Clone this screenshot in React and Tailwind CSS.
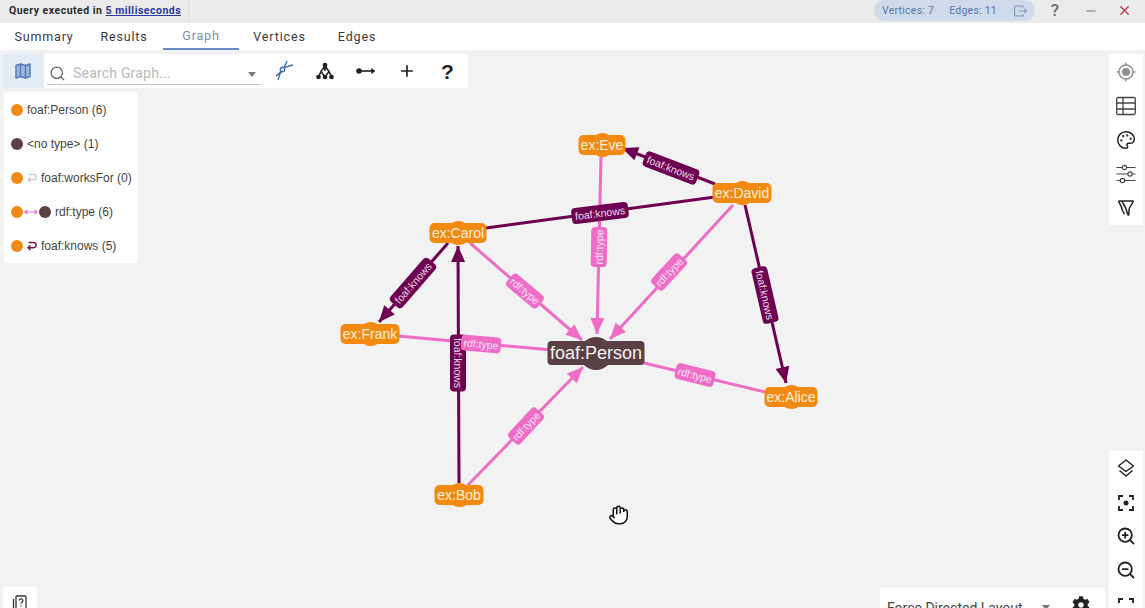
import { Search, Palette, ZoomIn, ZoomOut, Minus, X, Plus } from 'lucide-react';
import { FaCog } from 'react-icons/fa';

const DARK = '#6d0050';
const PINK = '#ee6cc6';

const edges = [
  { x1: 715, y1: 184, x2: 622, y2: 148, c: DARK, w: 3, arrow: true },
  { x1: 715, y1: 197, x2: 486, y2: 228, c: DARK, w: 3 },
  { x1: 745, y1: 205, x2: 786, y2: 383, c: DARK, w: 3, arrow: true },
  { x1: 448, y1: 243, x2: 379, y2: 322, c: DARK, w: 3, arrow: true },
  { x1: 459, y1: 483, x2: 458, y2: 246, c: DARK, w: 3, arrow: true },
  { x1: 601, y1: 157, x2: 597, y2: 334, c: PINK, w: 3, arrow: true },
  { x1: 733, y1: 205, x2: 610, y2: 339, c: PINK, w: 3, arrow: true },
  { x1: 470, y1: 243, x2: 582, y2: 340, c: PINK, w: 3, arrow: true },
  { x1: 398, y1: 336, x2: 552, y2: 350, c: PINK, w: 3 },
  { x1: 765, y1: 392, x2: 640, y2: 362, c: PINK, w: 3 },
  { x1: 468, y1: 485, x2: 583, y2: 367, c: PINK, w: 3, arrow: true },
];

const labels = [
  { text: 'foaf:knows', x: 671, y: 168, r: 21, dark: true },
  { text: 'foaf:knows', x: 600, y: 213, r: -7, dark: true },
  { text: 'foaf:knows', x: 765, y: 295, r: 77, dark: true },
  { text: 'foaf:knows', x: 413, y: 283, r: -49, dark: true },
  { text: 'foaf:knows', x: 458, y: 363, r: 90, dark: true },
  { text: 'rdf:type', x: 599, y: 247, r: -89 },
  { text: 'rdf:type', x: 669, y: 272, r: -47 },
  { text: 'rdf:type', x: 525, y: 291, r: 40 },
  { text: 'rdf:type', x: 481, y: 344, r: 5 },
  { text: 'rdf:type', x: 695, y: 375, r: 14 },
  { text: 'rdf:type', x: 526, y: 426, r: -47 },
];

const nodes = [
  { text: 'ex:Eve', x: 602, y: 145, w: 47 },
  { text: 'ex:David', x: 742, y: 193, w: 59 },
  { text: 'ex:Carol', x: 458, y: 233, w: 57 },
  { text: 'ex:Frank', x: 370, y: 334, w: 59 },
  { text: 'ex:Alice', x: 791, y: 397, w: 53 },
  { text: 'ex:Bob', x: 459, y: 495, w: 49 },
];

function arrowPoints(e) {
  const a = Math.atan2(e.y2 - e.y1, e.x2 - e.x1);
  const len = 16;
  const half = 7;
  const bx = e.x2 - Math.cos(a) * len;
  const by = e.y2 - Math.sin(a) * len;
  const px = -Math.sin(a) * half;
  const py = Math.cos(a) * half;
  return `${e.x2},${e.y2} ${bx + px},${by + py} ${bx - px},${by - py}`;
}

function Dot({ dark }) {
  return <span className={`block w-[12px] h-[12px] rounded-full ${dark ? 'bg-[#5a4044]' : 'bg-[#f28a12]'}`} />;
}

function LoopArrow({ color }) {
  return (
    <svg width="10" height="11" viewBox="0 0 10 11" fill="none" stroke={color} strokeWidth="1.4">
      <path d="M1.500 1.500h5a2.600 2.600 0 0 1 0 5.200H1" />
      <path d="M3.400 4.300 1 6.700l2.400 2.400" />
    </svg>
  );
}

function LegendRow({ children, label }) {
  return (
    <div className="h-[34px] flex items-center pl-[7px] gap-[4px] text-[12px] text-[#444] whitespace-nowrap">
      {children}
      <span>{label}</span>
    </div>
  );
}

function Legend() {
  return (
    <div className="absolute left-[4px] top-[92px] w-[134px] h-[171px] pt-[1px] bg-white rounded-[3px] font-['Liberation_Sans',sans-serif]">
      <LegendRow label="foaf:Person (6)"><Dot /></LegendRow>
      <LegendRow label="<no type> (1)"><Dot dark /></LegendRow>
      <LegendRow label="foaf:worksFor (0)"><Dot /><LoopArrow color="#c9cfc9" /></LegendRow>
      <LegendRow label="rdf:type (6)">
        <Dot />
        <svg width="14" height="8" viewBox="0 0 14 8" className="ml-[-3px] mr-[-3px]" fill="none" stroke="#ee6cc6" strokeWidth="1.2">
          <path d="M1 4h12M10.500 2 13 4l-2.500 2M3.500 2 1 4l2.500 2" />
        </svg>
        <Dot dark />
      </LegendRow>
      <LegendRow label="foaf:knows (5)"><Dot /><LoopArrow color="#7d1248" /></LegendRow>
    </div>
  );
}

function Toolbar() {
  return (
    <div className="absolute left-[2px] top-[54px] flex h-[34px] w-[466px] bg-white rounded-[3px]">
      <div className="w-[42px] shrink-0 bg-[#e3ebf5] flex items-center justify-center">
        <svg width="18" height="18" viewBox="0 0 18 18" fill="#9db8dc" stroke="#5478b5" strokeWidth="1.400" strokeLinejoin="round">
          <path d="M2 3.500 6.500 2l5 1.500L16 2v12.500L11.500 16l-5-1.500L2 16z" />
          <path d="M6.500 2v12.500M11.500 3.500V16" fill="none" />
        </svg>
      </div>
      <div className="relative ml-[3px] w-[214px] shrink-0 h-[31px] border-b border-[#c4c4c4] flex items-end pb-[2px]">
        <Search size={17} strokeWidth={1.8} className="ml-[2px] text-[#666]" />
        <span className="ml-[7px] text-[14px] leading-[18px] text-[#b9b9b9] font-['Roboto',sans-serif] tracking-[0.2px]">Search Graph...</span>
        <span className="absolute right-[5px] top-[18px] w-0 h-0 border-x-[4px] border-x-transparent border-t-[5px] border-t-[#777]" />
      </div>
      <div className="flex items-center ml-[2px]">
        <div className="w-[41px] flex justify-center">
          <svg width="20" height="22" viewBox="0 0 20 22" fill="none" stroke="#3f6fb5" strokeWidth="1.400">
            <path d="M2 16c2-1 4-3 6-6s6-4 11-5" />
            <path d="M4 20c1-4 2-7 4-10s4-5 5-9" />
            <circle cx="8.500" cy="9.500" r="2.200" fill="#fff" />
          </svg>
        </div>
        <div className="w-[41px] flex justify-center">
          <svg width="18" height="18" viewBox="0 0 18 18" fill="#1f1f1f" stroke="#1f1f1f" strokeWidth="1.500">
            <path d="M9 4 5 9.500 2.500 15M9 4l4 5.500 2.500 5.500M9 4v5M5 9.500 9 15l4-5.500" fill="none" />
            <circle cx="9" cy="3" r="1.600" />
            <circle cx="2.500" cy="15" r="1.600" />
            <circle cx="9" cy="15" r="1.600" />
            <circle cx="15.500" cy="15" r="1.600" />
          </svg>
        </div>
        <div className="w-[41px] flex justify-center">
          <svg width="20" height="10" viewBox="0 0 20 10" fill="#1f1f1f" stroke="#1f1f1f" strokeWidth="1.600">
            <path d="M3 5h15" />
            <circle cx="3" cy="5" r="2" />
            <path d="M15.500 2.500 19 5l-3.500 2.500z" strokeWidth="0.600" />
          </svg>
        </div>
        <div className="w-[41px] flex justify-center"><Plus size={18} strokeWidth={2.2} className="text-[#1f1f1f]" /></div>
        <div className="w-[41px] text-center text-[21px] font-bold leading-none text-[#1f1f1f] font-['Liberation_Sans',sans-serif]">?</div>
      </div>
    </div>
  );
}

function RightTools() {
  return (
    <div className="absolute right-[2px] top-[54px] w-[34px] h-[171px] bg-white flex flex-col items-center pt-[8px] gap-[14px] text-[#333]">
      <svg width="20" height="20" viewBox="0 0 20 20" fill="none" stroke="#8f8f8f" strokeWidth="1.400">
        <circle cx="10" cy="10" r="7" />
        <circle cx="10" cy="10" r="4" fill="#8f8f8f" stroke="none" />
        <path d="M10 0.500V3M10 17v2.500M0.500 10H3M17 10h2.500" />
      </svg>
      <svg width="20" height="20" viewBox="0 0 20 20" fill="none" stroke="#444" strokeWidth="1.300">
        <rect x="0.700" y="1.500" width="18.600" height="17" rx="1.500" />
        <path d="M0.700 7h18.600M0.700 13h18.600M7 1.500v17" />
      </svg>
      <Palette size={20} strokeWidth={1.8} className="text-[#222]" />
      <svg width="20" height="20" viewBox="0 0 20 20" fill="none" stroke="#444" strokeWidth="1.200">
        <path d="M0.500 3.500h6M11 3.500h8.500M0.500 10h11M16 10h3.500M0.500 16.500h4M9 16.500h10.500" />
        <circle cx="8.500" cy="3.500" r="2.200" />
        <circle cx="14" cy="10" r="2.200" />
        <circle cx="6.500" cy="16.500" r="2.200" />
      </svg>
      <svg width="18" height="18" viewBox="0 0 18 18" fill="none" stroke="#222" strokeWidth="1.500" strokeLinejoin="round" className="mt-[1px]">
        <path d="M1.500 2h15" />
        <path d="M1.500 2c1 3 3 5 3.500 8 .3 2 1 3 2.500 5" />
        <path d="M5 2c1 3 3 5 4 8 .5 2 1 4 2.500 6.500" />
        <path d="M16.500 2 12.500 9c-.7 1.500-.7 4-.7 7.500" />
      </svg>
    </div>
  );
}

function BottomTools() {
  return (
    <div className="absolute right-[2px] top-[451px] w-[34px] h-[157px] bg-white flex flex-col items-center pt-[7px] gap-[14px] text-[#222]">
      <svg width="18" height="20" viewBox="0 0 18 20" fill="none" stroke="#222" strokeWidth="1.500" strokeLinejoin="round" className="shrink-0">
        <path d="M9 2 16.500 8 9 13.500 1.500 8z" />
        <path d="M2.500 12.500 9 18l6.500-5.500" />
      </svg>
      <svg width="18" height="18" viewBox="0 0 18 18" fill="none" stroke="#222" strokeWidth="1.800" className="mt-[2px] shrink-0">
        <path d="M2 6V2h4M12 2h4v4M16 12v4h-4M6 16H2v-4" />
        <circle cx="9" cy="9" r="2.500" fill="#222" stroke="none" />
      </svg>
      <ZoomIn size={20} strokeWidth={2.2} className="shrink-0" />
      <ZoomOut size={20} strokeWidth={2.2} className="shrink-0" />
      <svg width="18" height="18" viewBox="0 0 18 18" fill="none" stroke="#222" strokeWidth="1.800" className="mt-[3px] shrink-0">
        <path d="M2 6V2h4M12 2h4v4M16 12v4h-4M6 16H2v-4" />
      </svg>
    </div>
  );
}

function Graph() {
  return (
    <>
      <svg className="absolute left-0 top-0" width="1145" height="608">
        {edges.map((e, i) => (
          <g key={i}>
            <line x1={e.x1} y1={e.y1} x2={e.x2} y2={e.y2} stroke={e.c} strokeWidth={e.w} />
            {e.arrow && <polygon points={arrowPoints(e)} fill={e.c} />}
          </g>
        ))}
      </svg>
      {labels.map((l, i) => (
        <div
          key={i}
          className={`absolute flex items-center justify-center rounded-[4px] h-[16px] text-[10.5px] leading-none font-['Liberation_Sans',sans-serif] ${l.dark ? 'w-[57px] bg-[#6d0050] text-[#f3dcec]' : 'w-[40px] bg-[#ee6cc6] text-[#fde3f5]'}`}
          style={{ left: l.x, top: l.y, transform: `translate(-50%, -50%) rotate(${l.r}deg)` }}
        >
          {l.text}
        </div>
      ))}
      {nodes.map((n) => (
        <div key={n.text} className="absolute" style={{ left: n.x, top: n.y, transform: 'translate(-50%, -50%)' }}>
          <div className="absolute left-1/2 top-1/2 w-[24px] h-[24px] -ml-[12px] -mt-[12px] rounded-full bg-[#f28a12]" />
          <div
            className="relative h-[20px] flex items-center justify-center rounded-[5px] bg-[#f28a12] text-[#fdf0dd] text-[14px] leading-none font-['Liberation_Sans',sans-serif]"
            style={{ width: n.w }}
          >
            {n.text}
          </div>
        </div>
      ))}
      <div className="absolute left-[596px] top-[353px] -translate-x-1/2 -translate-y-1/2">
        <div className="absolute left-1/2 top-1/2 w-[33px] h-[33px] -ml-[16.5px] -mt-[16.5px] rounded-full bg-[#5a4044]" />
        <div className="relative w-[97px] h-[24px] flex items-center justify-center rounded-[4px] bg-[#5a4044] text-[#f5f0ef] text-[18px] leading-none font-['Liberation_Sans',sans-serif]">
          foaf:Person
        </div>
      </div>
      <div className="absolute left-[608px] top-[504px]">
        <svg width="21" height="22" viewBox="0 0 24 24" fill="#fff" stroke="#111" strokeWidth="1.700" strokeLinecap="round" strokeLinejoin="round">
          <path d="M18 11V6a2 2 0 0 0-4 0M14 10V4a2 2 0 0 0-4 0v2M10 10.500V6a2 2 0 0 0-4 0v8" />
          <path d="M18 8a2 2 0 1 1 4 0v6a8 8 0 0 1-8 8h-2c-2.800 0-4.500-.900-6-2.400L2.400 16a2 2 0 0 1 2.800-2.800L7 15" />
        </svg>
      </div>
    </>
  );
}

export default function App() {
  return (
    <div className="w-[1145px] h-[608px] overflow-hidden flex flex-col bg-[#f2f2f2]">
      <div className="h-[23px] bg-[#ebebeb] flex items-center font-['Roboto',sans-serif]">
        <div className="w-[189px] h-full border-r border-[#dedede] pl-[9px] pb-[2px] flex items-center text-[10.5px] font-bold tracking-[0.5px] text-[#2c2c2c] whitespace-nowrap">
          Query executed in&nbsp;<span className="text-[#2a3aa0] underline">5 milliseconds</span>
        </div>
        <div className="ml-auto flex items-center h-full">
          <div className="w-[161px] h-[21px] -mt-[2px] rounded-full bg-[#cfdbea] flex items-center pl-[8px] text-[10.5px] tracking-[0.25px] text-[#5775ae] whitespace-nowrap">
            <span>Vertices: 7</span>
            <span className="ml-[15px]">Edges: 11</span>
            <svg width="13" height="12" viewBox="0 0 13 12" fill="none" stroke="#7f96bb" strokeWidth="1.100" className="ml-[17px]">
              <path d="M9 2.500V1H1.500a1 1 0 0 0-1 1v8a1 1 0 0 0 1 1H9V9.500M5 6h7.500M10.500 4l2 2-2 2" />
            </svg>
          </div>
          <div className="w-[40px] text-center text-[17px] text-[#6a6a6a] font-medium leading-none pb-[3px]">?</div>
          <div className="w-[32px] flex justify-center pb-[2px]"><Minus size={14} className="text-[#777]" /></div>
          <div className="w-[38px] pr-[4px] pb-[2px] flex justify-center"><X size={15} strokeWidth={2.2} className="text-[#c23a4e]" /></div>
        </div>
      </div>
      <div className="h-[27px] bg-white flex items-stretch pl-[3px] pt-[1px] text-[12.5px] tracking-[0.85px] text-[#3a3a3a] font-['Roboto',sans-serif]">
        <div className="w-[82px] flex items-center justify-center">Summary</div>
        <div className="w-[78px] flex items-center justify-center">Results</div>
        <div className="w-[76px] flex items-center justify-center text-[#7b8fb5] border-b-2 border-[#6a8bc4]">Graph</div>
        <div className="w-[81px] flex items-center justify-center">Vertices</div>
        <div className="w-[74px] flex items-center justify-center">Edges</div>
      </div>
      <div className="flex-1" />
      <Graph />
      <Toolbar />
      <Legend />
      <RightTools />
      <BottomTools />
      <div className="absolute left-[880px] top-[588px] w-[225px] h-[20px] bg-white flex items-start pl-[7px] pt-[13px] text-[14px] leading-none text-[#444] font-['Roboto',sans-serif] overflow-hidden">
        <span>Force Directed Layout</span>
        <span className="ml-[19px] mt-[4px] w-0 h-0 border-x-[4px] border-x-transparent border-t-[5px] border-t-[#777]" />
        <FaCog size={18} className="ml-[22px] -mt-[5px] text-[#222]" />
      </div>
      <div className="absolute left-[3px] top-[587px] w-[34px] h-[21px] bg-white flex justify-center pt-[8px]">
        <svg width="16" height="16" viewBox="0 0 16 16" fill="none" stroke="#333" strokeWidth="1.300">
          <rect x="4" y="1" width="10" height="14" rx="1" />
          <path d="M1.500 4v11" />
          <path d="M7.300 5.500a1.800 1.800 0 1 1 2.700 1.600c-.6.4-1 .7-1 1.400M9 10.500v1" />
        </svg>
      </div>
    </div>
  );
}
